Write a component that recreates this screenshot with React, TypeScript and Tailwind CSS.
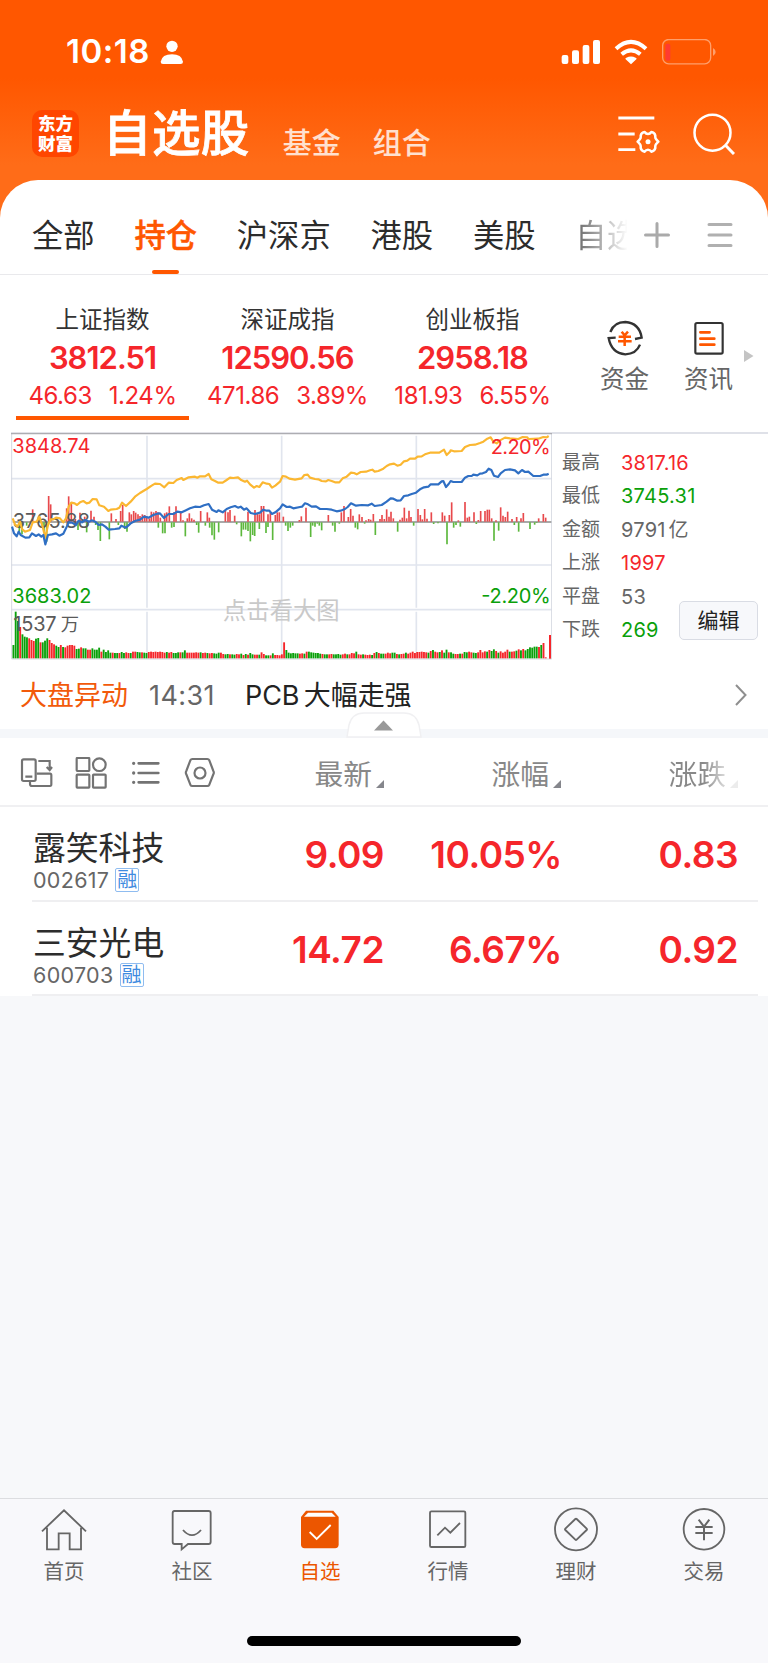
import React from "react";

const FONT = "font-['Inter','Noto_Sans_CJK_SC',sans-serif]";

/* ---------- chart data (three units per pixel) ---------- */

const AVERAGE_LINE =
  "38,280 45,298 52,305 60,290 66,312 75,320 90,315 98,292 110,290 118,275 128,305 136,338 144,300 152,283 160,283 168,278 180,280 190,292 198,280 206,245 214,233 224,235 231,240 240,232 250,228 260,235 268,233 278,222 290,223 298,241 312,245 325,258 332,254 350,252 358,248 366,233 378,243 392,230 405,215 420,204 440,192 455,182 465,176 480,177 493,187 506,173 520,174 530,165 545,159 550,165 566,157 585,155 592,158 600,154 615,154 626,147 634,163 645,168 655,173 668,173 680,165 690,158 700,159 714,157 722,164 735,170 741,167 750,178 762,188 770,183 778,186 788,172 800,176 808,177 816,188 826,182 840,170 848,153 858,155 868,161 885,164 905,160 913,150 923,149 930,158 945,162 955,163 965,168 978,169 985,165 995,168 1005,172 1018,172 1028,160 1040,155 1053,143 1062,144 1070,148 1082,141 1098,140 1110,136 1117,134 1124,140 1135,138 1150,131 1160,123 1170,118 1182,116 1192,122 1202,119 1212,109 1222,107 1230,101 1245,101 1253,95 1265,94 1275,88 1290,83 1318,83 1332,74 1340,90 1350,80 1352,76 1362,79 1385,78 1395,66 1410,60 1425,59 1440,54 1450,50 1462,41 1472,37 1480,50 1490,55 1500,46 1515,38 1530,40 1555,42 1568,36 1582,37 1585,42 1615,41 1630,36 1640,37 1646,33";

const INDEX_LINE =
  "36,305 42,325 50,334 56,320 62,330 76,338 88,337 96,325 108,333 116,328 124,335 130,330 136,358 144,330 156,328 168,325 178,332 190,326 198,310 206,292 216,293 228,300 236,287 246,292 256,285 268,290 275,286 286,290 296,300 306,298 316,305 326,314 345,312 358,310 364,302 378,308 392,295 405,288 420,284 432,275 446,278 460,270 472,266 480,265 492,279 506,267 520,267 532,260 545,262 555,257 570,250 585,245 600,246 612,241 626,237 636,254 650,261 655,256 668,262 680,252 692,247 705,243 714,248 722,245 732,254 740,250 752,264 765,267 780,263 790,254 800,257 808,257 816,267 826,262 840,250 848,238 860,246 870,245 880,250 900,246 906,245 915,235 924,238 935,245 948,244 960,252 980,252 995,254 1010,259 1022,257 1035,252 1043,246 1053,235 1068,242 1085,240 1105,241 1115,236 1124,243 1145,240 1160,230 1172,220 1180,221 1192,227 1202,226 1212,213 1225,211 1235,207 1248,203 1260,193 1272,187 1285,185 1292,178 1315,178 1325,169 1330,168 1338,186 1346,177 1352,168 1360,171 1385,171 1395,158 1405,153 1415,153 1420,149 1432,151 1440,146 1448,145 1458,141 1466,131 1474,135 1482,152 1494,156 1502,145 1515,135 1530,133 1545,136 1555,145 1566,135 1575,141 1585,140 1600,153 1620,153 1630,149 1640,149 1646,146";

const UP_BARS: number[][] = [
  [98, 253], [118, 275], [146, 213], [152, 238], [200, 250], [206, 214], [214, 232], [226, 282], [240, 263], [254, 275],
  [273, 257], [282, 275], [334, 265], [348, 282], [362, 258], [368, 240], [388, 262], [394, 268], [401, 258], [407, 263],
  [414, 268], [420, 273], [427, 268], [434, 270], [440, 274], [448, 280], [454, 260], [461, 262], [468, 258], [474, 262],
  [481, 278], [494, 265], [500, 262], [508, 244], [522, 262], [528, 244], [542, 258], [549, 286], [562, 280], [568, 265],
  [575, 280], [582, 284], [602, 258], [622, 262], [628, 278], [676, 255], [684, 262], [690, 255], [704, 272], [744, 260],
  [765, 255], [772, 265], [778, 268], [784, 243], [791, 243], [804, 268], [811, 262], [826, 270], [832, 262], [838, 262],
  [850, 275], [898, 285], [904, 274], [918, 248], [985, 270], [1024, 262], [1032, 243], [1045, 276], [1052, 252],
  [1059, 272], [1078, 268], [1086, 276], [1098, 286], [1106, 282], [1112, 284], [1120, 267], [1140, 282], [1146, 270],
  [1153, 282], [1160, 253], [1167, 275], [1173, 260], [1180, 280], [1200, 284], [1207, 278], [1213, 248], [1220, 280],
  [1227, 257], [1233, 276], [1254, 252], [1261, 270], [1267, 283], [1274, 252], [1281, 281], [1294, 262], [1327, 262],
  [1334, 272], [1348, 270], [1355, 232], [1375, 286], [1395, 231], [1402, 278], [1408, 275], [1422, 262], [1435, 285],
  [1442, 258], [1455, 258], [1462, 254], [1468, 254], [1475, 280], [1488, 286], [1502, 247], [1509, 272], [1516, 276],
  [1523, 260], [1536, 282], [1550, 276], [1563, 280], [1570, 264], [1616, 280], [1630, 267], [1637, 278],
];

const DOWN_BARS: number[][] = [
  [58, 320], [66, 328], [80, 302], [126, 302], [132, 320], [140, 350], [234, 315], [260, 322], [287, 300], [294, 315],
  [301, 348], [328, 343], [355, 300], [374, 312], [381, 320], [475, 308], [488, 325], [495, 325], [515, 308],
  [522, 306], [556, 334], [590, 300], [596, 323], [616, 302], [629, 308], [636, 331], [643, 344], [656, 322],
  [710, 298], [724, 334], [730, 314], [737, 314], [744, 318], [751, 349], [758, 330], [764, 333], [778, 312],
  [798, 324], [804, 306], [818, 345], [857, 302], [864, 318], [871, 308], [878, 302], [932, 336], [938, 302],
  [945, 305], [952, 296], [958, 302], [965, 316], [998, 302], [1005, 320], [1018, 296], [1066, 308], [1073, 313],
  [1094, 296], [1126, 330], [1193, 320], [1241, 302], [1301, 297], [1314, 295], [1341, 358], [1361, 308],
  [1368, 300], [1381, 305], [1429, 297], [1482, 347], [1496, 317], [1543, 300], [1556, 320], [1590, 312],
  [1604, 299], [1610, 294],
];

type Run = ["g" | "r", ...number[]];

const VOLUME_RUNS: Run[] = [
  ["g", 40, 140, 112], ["r", 94], ["g", 72, 65, 63], ["r", 60, 55, 52], ["g", 59, 61], ["r", 48], ["g", 48, 53, 60],
  ["r", 55, 46, 42], ["g", 38, 34], ["r", 40], ["g", 34], ["r", 33, 38, 40, 40, 38], ["g", 28, 29],
  ["r", 33], ["g", 30, 30], ["r", 26, 26], ["g", 30, 26, 26, 32], ["r", 20], ["g", 26, 19, 24, 17],
  ["r", 17], ["g", 16, 16], ["r", 16], ["g", 19, 16], ["r", 18, 16], ["g", 16], ["r", 20, 20], ["g", 19, 18],
  ["r", 18], ["g", 17, 16], ["r", 19, 20, 19, 20, 19, 20, 19, 17], ["g", 19], ["r", 17, 19], ["g", 16, 16, 18], ["r", 18],
  ["g", 18, 24], ["r", 17, 17, 17, 17, 18, 17], ["g", 18], ["r", 16, 17], ["g", 16], ["r", 15, 16], ["g", 15, 14, 17],
  ["r", 17, 13], ["g", 12, 13], ["r", 12], ["g", 12, 11], ["r", 13, 12], ["g", 14], ["r", 10], ["g", 13],
  ["r", 11], ["g", 16, 12], ["r", 11, 11], ["g", 11], ["r", 18, 13], ["g", 9, 9], ["r", 9], ["g", 15],
  ["r", 10, 10, 9], ["r", 12, 48], ["g", 25, 17, 15, 16, 15, 15], ["r", 14, 15], ["g", 14], ["r", 20],
  ["g", 20, 18, 17, 16, 16, 14], ["r", 13], ["g", 12, 12], ["r", 12, 13], ["g", 12, 12, 13, 11], ["r", 12, 14],
  ["g", 12], ["r", 12, 16, 15], ["g", 20], ["r", 12, 11], ["g", 12], ["r", 11, 10, 11], ["g", 10], ["r", 16],
  ["g", 19], ["r", 16], ["g", 14, 14], ["r", 14, 17, 15], ["g", 17, 17], ["r", 13], ["g", 12], ["r", 13, 14],
  ["g", 17], ["r", 14, 17, 20, 16, 19, 19, 20, 19, 18], ["g", 17], ["r", 22], ["g", 25], ["r", 20, 18], ["g", 19],
  ["r", 24], ["g", 17, 26], ["r", 18], ["g", 18, 14], ["r", 13, 13], ["g", 14], ["r", 14], ["g", 19, 18],
  ["r", 20, 18], ["g", 17, 16], ["r", 18, 25, 18, 21], ["g", 20], ["r", 25], ["g", 22, 27], ["r", 22], ["g", 17],
  ["r", 21, 17, 20, 26], ["g", 20], ["r", 20, 21], ["g", 23], ["r", 27], ["g", 24], ["r", 28], ["g", 24, 28, 33, 32, 35, 35],
  ["r", 34], ["g", 40], ["r", 46, 3],
];

const VOLUME = VOLUME_RUNS.flatMap(([kind, ...heights]) => heights.map((h) => ({ kind, h: h as number })));

function IndexChart() {
  const step = (1637 - 40) / (VOLUME.length - 1);
  return (
    <svg className="block h-[228px] w-[541px] shrink-0" viewBox="33 21 1623 684">
      <g stroke="#e1e5ee" strokeWidth="5">
        <path d="M33 161H1656M33 420H1656M33 554H1656" />
        <path d="M441 32V548M441 560V700M845 32V548M845 560V700M1249 32V548M1249 560V700" />
      </g>
      <path d="M35 25V702H1655V25" fill="none" stroke="#d5d8e0" strokeWidth="3" />
      <path d="M33 22H1656" stroke="#dcdde4" strokeWidth="3" />
      <path d="M33 26H1656" stroke="#adadb2" strokeWidth="3.5" />
      <text x="844" y="582" textAnchor="middle" textLength="350" fontSize="70" fill="#c9c9c9">点击看大图</text>
      <path d="M38 291H1654" stroke="#8c8c8c" strokeWidth="4" />
      {UP_BARS.map(([x, y]) => (
        <path key={x} d={`M${x} 290V${y}`} stroke="#e8494c" strokeWidth="5" />
      ))}
      {DOWN_BARS.map(([x, y]) => (
        <path key={x} d={`M${x} 292V${y}`} stroke="#5cb83c" strokeWidth="5" />
      ))}
      {VOLUME.map(({ kind, h }, i) => (
        <rect key={i} x={37.5 + i * step} y={700 - h} width="5.6" height={h} fill={kind === "g" ? "#0aa00a" : "#f5262b"} />
      ))}
      <rect x="1647" y="630" width="6" height="71" fill="#f5262b" />
      <text x="38" y="309" textLength="232" fontSize="60" fill="#5a5a5a">3765.88</text>
      <polyline points={AVERAGE_LINE} fill="none" stroke="#fbb731" strokeWidth="6.5" strokeLinejoin="round" />
      <polyline points={INDEX_LINE} fill="none" stroke="#2f6fc4" strokeWidth="6.5" strokeLinejoin="round" />
      <g fontSize="60">
        <text x="37" y="85" textLength="234" fill="#f5262b">3848.74</text>
        <text x="37" y="534" textLength="237" fill="#0aa00a">3683.02</text>
        <text x="40" y="618" textLength="130" fill="#5a5a5a">1537</text>
        <text x="182" y="618" fill="#5a5a5a" fontSize="55">万</text>
        <text x="1652" y="86" textAnchor="end" textLength="180" fill="#f5262b">2.20%</text>
        <text x="1652" y="534" textAnchor="end" textLength="208" fill="#0aa00a">-2.20%</text>
      </g>
    </svg>
  );
}

/* ---------- header ---------- */

function StatusBar() {
  return (
    <div className="flex h-[103px] items-center pl-[66px] pr-[52px] text-white">
      <span className="text-[33px] font-semibold leading-none tracking-[0.5px]">10:18</span>
      <svg className="ml-[10px] h-6 w-6" viewBox="478 117 72 72" fill="#fff">
        <circle cx="514" cy="136" r="17" />
        <path d="M487 189Q480 189 480 182Q484 160 514 160Q543 160 547 182Q547 189 540 189Z" />
      </svg>
      <svg className="ml-auto h-[26px] w-[155px]" viewBox="531 114 465 78">
        <g fill="#fff">
          <rect x="533" y="162" width="20" height="27" rx="6" />
          <rect x="564" y="148" width="21" height="41" rx="6" />
          <rect x="596" y="132" width="20" height="57" rx="6" />
          <rect x="627" y="117" width="21" height="72" rx="6" />
          <path d="M741 190L725 175Q722 172 727 170Q741 163 755 170Q760 172 757 175Z" />
        </g>
        <g fill="none" stroke="#fff" strokeWidth="12">
          <path d="M696 143Q741 102 786 143" />
          <path d="M713 160Q741 136 769 160" />
        </g>
        <rect x="836" y="115.500" width="144" height="73" rx="18" fill="none" stroke="#ff9f6b" strokeWidth="4" />
        <rect x="844" y="128" width="15" height="51" rx="6" fill="#ff3b30" />
        <path d="M987 141Q995 146 995 153Q995 160 987 165Z" fill="#ff9f6b" />
      </svg>
    </div>
  );
}

function TitleBar() {
  return (
    <div className="flex h-[77px] items-center pb-4 pl-8 pr-[33px] text-white">
      <div className="flex h-[47px] w-[47px] flex-col items-center justify-center rounded-[10px] bg-[#ff4600] text-[17.500px] font-black leading-[19.500px]">
        <span>东方</span>
        <span>财富</span>
      </div>
      <h1 className="ml-[24px] text-[48.500px] font-medium leading-[60px] tracking-[0.4px] [-webkit-text-stroke:0.8px_#fff]">自选股</h1>
      <span className="ml-[33px] pt-[21px] text-[29px] font-medium leading-[40px] text-white/80">基金</span>
      <span className="ml-[32px] pt-[21px] text-[29px] font-medium leading-[40px] text-white/80">组合</span>
      <svg className="ml-auto h-[38px] w-[42px]" viewBox="701 346 126 114" fill="none" stroke="#fff">
        <path d="M702 355H810M702 403H751M702 450H753" strokeWidth="8.500" />
        <path
          d="M781 397Q785 403 791 403Q797 403 801 397Q811 398 813 408Q812 414 815 418Q818 422 822 426Q818 430 815 434Q812 438 813 445Q811 454 801 456Q797 450 791 450Q785 450 781 456Q771 454 769 445Q770 438 767 434Q764 430 760 426Q764 422 767 418Q770 414 769 408Q771 398 781 397Z"
          strokeWidth="7.500"
          strokeLinejoin="round"
        />
        <circle cx="791" cy="426" r="7.500" fill="#fff" stroke="none" />
      </svg>
      <svg className="ml-[33px] h-[42px] w-[42px]" viewBox="925 337 126 126" fill="none" stroke="#fff" strokeWidth="7.500">
        <circle cx="983.500" cy="396" r="54" />
        <path d="M1021 432L1048 460" strokeWidth="9" />
      </svg>
    </div>
  );
}

function MarketTabs() {
  const tabs = ["全部", "持仓", "沪深京", "港股", "美股"];
  return (
    <div className="flex h-[95px] items-stretch rounded-t-[38px] border-b border-[#e9e9ec] bg-white pl-[32px]">
      <div className="flex w-[595px] gap-[39.800px] overflow-hidden whitespace-nowrap text-[31.300px] text-[#2c2c2c]">
        {tabs.map((tab) =>
          tab === "持仓" ? (
            <div key={tab} className="flex flex-col items-center font-medium text-[#ff5700]">
              <span className="pt-[34px] leading-[44px] [-webkit-text-stroke:0.5px_#ff5700]">{tab}</span>
              <span className="mt-auto h-1 w-[27px] rounded-full bg-[#ff5700]" />
            </div>
          ) : (
            <span key={tab} className="pt-[34px] leading-[44px]">{tab}</span>
          ),
        )}
        <span className="bg-gradient-to-r from-[#777] from-10% to-[#fff] to-[84%] bg-clip-text pt-[34px] leading-[44px] text-transparent">
          自选
        </span>
      </div>
      <svg className="ml-[16px] mt-[41px] h-[28px] w-[28px]" viewBox="0 0 28 28" fill="none" stroke="#aaa" strokeWidth="3" strokeLinecap="round">
        <path d="M2.500 14H25.500M14 2.500V25.500" />
      </svg>
      <svg className="ml-[36px] mt-[41px] h-[28px] w-[26px]" viewBox="0 0 26 28" fill="none" stroke="#b0b0b0" strokeWidth="3" strokeLinecap="round">
        <path d="M2 3.500H24M2 14H24M2 24.500H24" />
      </svg>
    </div>
  );
}

/* ---------- index summary ---------- */

const INDICES = [
  { name: "上证指数", value: "3812.51", change: "46.63", percent: "1.24%", active: true },
  { name: "深证成指", value: "12590.56", change: "471.86", percent: "3.89%", active: false },
  { name: "创业板指", value: "2958.18", change: "181.93", percent: "6.55%", active: false },
];

function IndexSummary() {
  return (
    <div className="flex h-[157px]">
      <div className="flex pl-[10px]">
        {INDICES.map((item) => (
          <div key={item.name} className="flex w-[185px] flex-col items-center whitespace-nowrap pt-[30px] text-[#f5262b]">
            <span className="text-[23.500px] leading-[30px] text-[#333]">{item.name}</span>
            <span className="mt-[5px] text-[31px] font-semibold leading-[36px] tracking-[-1px]">{item.value}</span>
            <span className="mt-[6px] flex gap-[17px] text-[24px] leading-[28px] tracking-[-0.45px]">
              <span>{item.change}</span>
              <span>{item.percent}</span>
            </span>
            {item.active && <span className="mt-[6px] h-1 w-[173px] bg-[#ff5700]" />}
          </div>
        ))}
      </div>
      <div className="ml-[35px] flex w-[49px] flex-col items-center whitespace-nowrap pt-[44px] text-[24.500px] leading-[32px] text-[#666]">
        <svg className="h-[38px] w-[38px] shrink-0" viewBox="666 416 114 114" fill="none" strokeWidth="7">
          <g stroke="#333">
            <path d="M679 455Q690 425 724 425Q766 428 773 472L753 476" />
            <path d="M768 493Q757 521 724 522Q682 518 674 473L695 472" />
          </g>
          <path d="M713 454L722 465L732 454M704 469H741M702 483H743M722 465V497" stroke="#ff5700" strokeWidth="7.500" />
        </svg>
        <span className="pt-[6px]">资金</span>
      </div>
      <div className="ml-[35px] flex w-[49px] flex-col items-center whitespace-nowrap pt-[44px] text-[24.500px] leading-[32px] text-[#666]">
        <svg className="h-[38px] w-[38px] shrink-0" viewBox="920 416 114 114" fill="none" strokeWidth="6.500">
          <rect x="936" y="428" width="82" height="92" rx="5" stroke="#333" />
          <path d="M951 456H979M951 475H993M951 493H993" stroke="#ff5700" strokeWidth="8" strokeLinecap="round" />
        </svg>
        <span className="pt-[6px]">资讯</span>
      </div>
      <svg className="ml-[11px] mt-[75px] h-3 w-[10px]" viewBox="0 0 10 12">
        <path d="M0 0L9.500 6L0 12Z" fill="#c4c4c4" />
      </svg>
    </div>
  );
}

const STATS = [
  ["最高", "3817.16", "text-[#f5262b]"],
  ["最低", "3745.31", "text-[#0aa00a]"],
  ["金额", "9791 亿", "text-[#666]"],
  ["上涨", "1997", "text-[#f5262b]"],
  ["平盘", "53", "text-[#666]"],
  ["下跌", "269", "text-[#0aa00a]"],
];

function ChartPanel() {
  return (
    <div className="flex h-[228px] pl-[11px]">
      <IndexChart />
      <div className="relative grow border-t-2 border-[#dfe1e8] pl-[10px] pt-[12px]">
        {STATS.map(([label, value, tone]) => (
          <div key={label} className="flex h-[33.500px] items-center whitespace-nowrap text-[19px] leading-[30px]">
            <span className="w-[59px] text-[#666]">{label}</span>
            <span className={`text-[20px] tracking-[0.25px] [word-spacing:-3px] ${tone}`}>{value}</span>
          </div>
        ))}
        <button className="absolute right-[10px] top-[167px] h-[39px] w-[79px] rounded-[5px] border border-[#d9dce4] bg-[#f7f8fb] text-[21px] leading-none text-[#222]">
          编辑
        </button>
      </div>
    </div>
  );
}

function NewsRow() {
  return (
    <div className="flex h-[69px] items-center whitespace-nowrap pl-5 pr-[21px] pt-[3px] text-[27px]">
      <span className="text-[#f25a0a]">大盘异动</span>
      <span className="ml-[21px] w-[96px] tracking-[0.4px] text-[#666]">14:31</span>
      <span className="tracking-[-0.1px] text-[#222] [word-spacing:-3px]">PCB 大幅走强</span>
      <svg className="ml-auto mt-[-3px] h-6 w-3" viewBox="0 0 12 24" fill="none" stroke="#8f8f8f" strokeWidth="2">
        <path d="M1 2L10.500 12L1 22" />
      </svg>
    </div>
  );
}

function CollapseHandle() {
  return (
    <div className="relative h-[9px] bg-[#f5f7fa]">
      <svg className="absolute left-[345px] top-[-18px] h-[27px] w-[78px]" viewBox="0 0 78 27">
        <path d="M2 26L4 14Q7 2 19 2H59Q71 2 74 14L76 26Z" fill="#fff" stroke="#f0f0f2" strokeWidth="1.500" />
        <path d="M29 19.500L38.500 9.500L48 19.500Z" fill="#999" />
      </svg>
    </div>
  );
}

/* ---------- watch list ---------- */

function Corner({ className }: { className: string }) {
  return (
    <svg className={`ml-[4px] mt-[22px] h-2 w-2 ${className}`} viewBox="0 0 8 8">
      <path d="M8 0V8H0Z" fill="currentColor" />
    </svg>
  );
}

function ListHeader() {
  return (
    <div className="flex h-[69px] items-center whitespace-nowrap border-b-2 border-[#f0f0f2] pt-[2px] text-[28.800px] leading-[40px] text-[#888]">
      <svg className="ml-[20px] h-[32px] w-[196px] shrink-0" viewBox="60 291 588 96" fill="none" stroke="#737373" strokeWidth="6.500">
        <rect x="66" y="298" width="41" height="65" rx="5" />
        <path d="M76 350H97M115 303H149V328M140 321L149 330L156 321" />
        <path d="M110 341H150Q154 341 154 346V373Q154 378 150 378H96Q90 378 90 372V364" />
        <rect x="230" y="294" width="38" height="39" rx="2" />
        <circle cx="298" cy="314" r="19" />
        <rect x="230" y="344" width="38" height="39" rx="2" />
        <rect x="279" y="344" width="38" height="39" rx="2" />
        <path d="M416 310H475M416 339H475M416 367H475" strokeWidth="8" strokeLinecap="round" />
        <path d="M401 310V310.100M401 339V339.100M401 367V367.100" strokeWidth="10" strokeLinecap="round" />
        <path d="M577 297H622Q626 297 628 301L640 333Q643 338 640 343L628 374Q626 378 622 378H577Q573 378 571 374L559 343Q556 338 559 333L571 301Q573 297 577 297Z" />
        <circle cx="600" cy="339" r="16.500" />
      </svg>
      <div className="flex w-[168px] items-center justify-end">
        <span className="pt-[4px]">最新</span>
        <Corner className="text-[#85868c]" />
      </div>
      <div className="flex w-[177px] items-center justify-end">
        <span className="pt-[4px]">涨幅</span>
        <Corner className="text-[#85868c]" />
      </div>
      <div className="flex w-[177px] items-center justify-end">
        <span className="bg-gradient-to-r from-[#888] from-60% to-[#ddd] bg-clip-text pt-[4px] text-transparent">涨跌</span>
        <Corner className="text-[#ececec]" />
      </div>
    </div>
  );
}

const STOCKS = [
  { name: "露笑科技", code: "002617", price: "9.09", percent: "10.05%", change: "0.83" },
  { name: "三安光电", code: "600703", price: "14.72", percent: "6.67%", change: "0.92" },
];

function StockRow({ stock }: { stock: (typeof STOCKS)[number] }) {
  return (
    <div className="ml-8 mr-[10px] flex h-[94.500px] border-b-2 border-[#efeff1]">
      <div className="w-[170px] whitespace-nowrap pl-[1px] pt-[21px]">
        <div className="text-[32.800px] leading-[41px] text-[#2c2c2c]">{stock.name}</div>
        <div className="-mt-px flex h-[24px] items-center gap-[6px] text-[21.500px] leading-[24px] text-[#666]">
          <span className="tracking-[0.3px]">{stock.code}</span>
          <span className="flex h-[24px] w-[24px] items-center justify-center rounded-[2px] border-[1.500px] border-[#8fbcf0] text-[20px] leading-none text-[#3f8be0]">
            融
          </span>
        </div>
      </div>
      <div className="flex pt-[26px] text-right text-[37px] font-semibold leading-[44px] tracking-[-0.5px] text-[#f5262b]">
        <span className="w-[182px]">{stock.price}</span>
        <span className="w-[178px]">{stock.percent}</span>
        <span className="w-[176px]">{stock.change}</span>
      </div>
    </div>
  );
}

/* ---------- bottom navigation ---------- */

const NAV: { label: string; icon: React.ReactNode }[] = [
  {
    label: "首页",
    icon: <path d="M6 45L72 -18L138 45M21 34V99H56V51H89V99H123V34" transform="translate(0 22)" />,
  },
  {
    label: "社区",
    icon: <path d="M17 6H122Q128 6 128 12V99Q128 105 122 105H60L41 121V105H20Q14 105 14 99V12Q14 6 20 6M45 63Q72 94 99 63" />,
  },
  {
    label: "自选",
    icon: (
      <>
        <path d="M30 5H112L128 24V106Q128 118 117 118H26Q15 118 15 106V24Z" fill="#ec5600" stroke="none" />
        <path d="M36 11H107L119 23H24Z" fill="#fff" stroke="none" />
        <path d="M41 69L62 90L104 48" stroke="#fff" strokeWidth="5.500" />
      </>
    ),
  },
  {
    label: "行情",
    icon: (
      <>
        <rect x="18" y="7" width="106" height="107" rx="4" />
        <path d="M40 79L63 56L79 71L108 42" />
      </>
    ),
  },
  {
    label: "理财",
    icon: (
      <>
        <circle cx="72" cy="61" r="63" />
        <path d="M70 30Q72 28 74 30L104 59Q106 61 104 63L74 92Q72 94 70 92L40 63Q38 61 40 59Z" />
      </>
    ),
  },
  {
    label: "交易",
    icon: (
      <>
        <circle cx="72" cy="61" r="61" />
        <path d="M56 32L72 53L88 32M46 54H98M46 72H98M72 53V94" strokeWidth="6" />
      </>
    ),
  },
];

function BottomNav() {
  return (
    <nav className="flex h-[165px] flex-col border-t border-[#dcdde0] bg-[#f8f8fb]">
      <div className="grid grid-cols-6">
        {NAV.map(({ label, icon }) => {
          const active = label === "自选";
          return (
            <div key={label} className={`flex flex-col items-center pt-[8px] ${active ? "text-[#ec5600]" : "text-[#666]"}`}>
              <svg className="h-[46px] w-[48px]" viewBox="0 -6 144 138" fill="none" stroke="currentColor" strokeWidth="5.500">
                {icon}
              </svg>
              <span className="mt-[5px] text-[20.500px] leading-[28px]">{label}</span>
            </div>
          );
        })}
      </div>
      <div className="mx-auto mb-[17px] mt-auto h-[10px] w-[274px] rounded-full bg-black" />
    </nav>
  );
}

export default function App() {
  return (
    <div className={`flex h-[1663px] w-[768px] flex-col overflow-hidden bg-[#f7f8fa] ${FONT}`}>
      <header className="bg-[linear-gradient(#ff5700_78px,#ff6c18_165px)]">
        <StatusBar />
        <TitleBar />
        <MarketTabs />
      </header>
      <section className="bg-white">
        <IndexSummary />
        <ChartPanel />
        <NewsRow />
        <CollapseHandle />
        <ListHeader />
        {STOCKS.map((stock) => (
          <StockRow key={stock.code} stock={stock} />
        ))}
      </section>
      <div className="grow" />
      <BottomNav />
    </div>
  );
}
